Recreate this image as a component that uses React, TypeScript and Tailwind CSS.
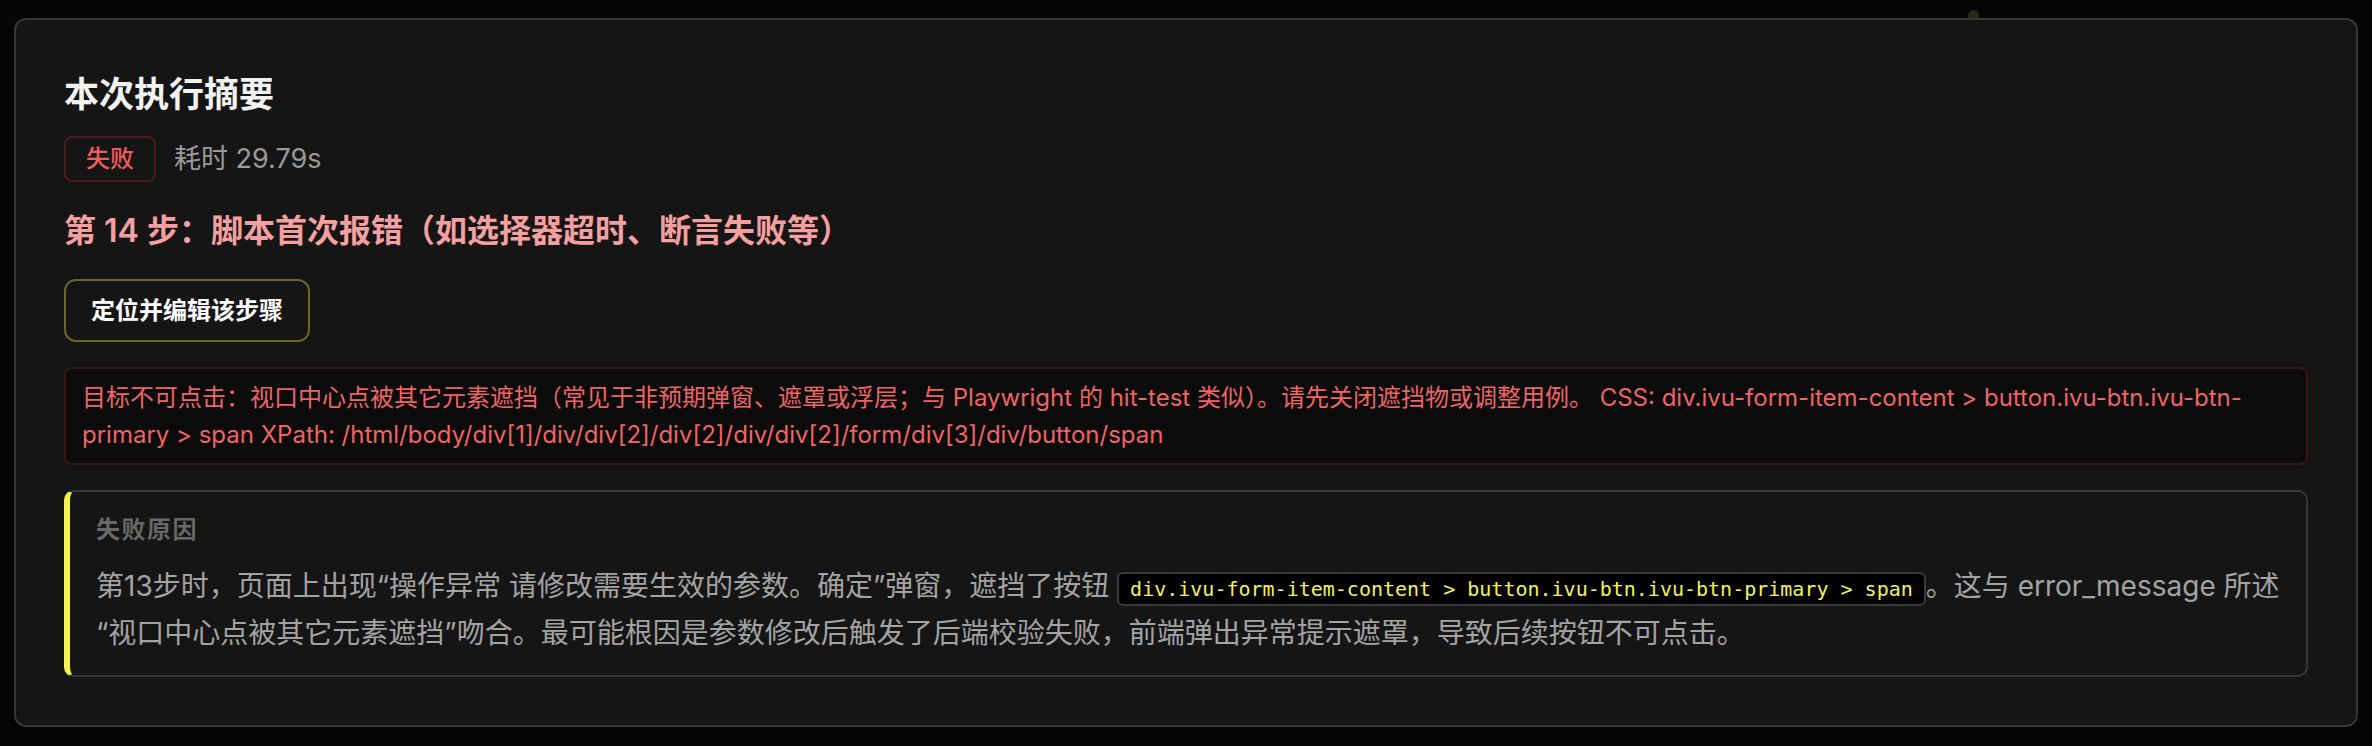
import React from "react";

const sans = "font-['Inter','Noto_Sans_CJK_SC',sans-serif]";

export default function App() {
  const cssPath = "div.ivu-form-item-content > button.ivu-btn.ivu-btn-primary > span";

  return (
    <div className={`relative min-h-screen bg-[#050505] px-[14px] pt-[18px] pb-[18px] ${sans}`}>
      {/* small dim dot peeking above the card */}
      <div className="absolute left-[1968px] top-[10px] h-[11px] w-[11px] rounded-full bg-[#29291a]" />

      <div className="relative rounded-[12px] border-2 border-[#363636] bg-[#151515] px-[48px] pt-[48px] pb-[48px]">
        <h2 className="text-[35px] leading-[52px] font-semibold text-[#f2f2f2]">本次执行摘要</h2>

        <div className="mt-[16px] flex items-center gap-[18px]">
          <span className="flex h-[46px] items-center rounded-[8px] border-2 border-[#4a1b1b] px-[20px] text-[24px] font-medium text-[#f25c5c]">
            失败
          </span>
          <span className="text-[27px] text-[#9a9a9a]">耗时 29.79s</span>
        </div>

        <div className="mt-[27px] text-[32px] leading-[44px] font-semibold text-[#f4a0a0]">
          第 14 步：脚本首次报错（如选择器超时、断言失败等）
        </div>

        <button className="mt-[26px] flex h-[63px] items-center rounded-[12px] border-2 border-[#67672b] px-[25px] text-[24px] font-semibold text-white">
          定位并编辑该步骤
        </button>

        <div className="mt-[25px] rounded-[8px] border-2 border-[#3d1517] bg-[#0b0b0b] px-[16px] py-[10px] text-[24px] leading-[37px] text-[#f06464]">
          目标不可点击：视口中心点被其它元素遮挡（常见于非预期弹窗、遮罩或浮层；与 Playwright 的 hit-test 类似）。请先关闭遮挡物或调整用例。 CSS: {cssPath} XPath: /html/body/div[1]/div/div[2]/div[2]/div/div[2]/form/div[3]/div/button/span
        </div>

        <div className="mt-[25px] rounded-[10px] border-2 border-l-[6px] border-[#383838] border-l-[#f5f552] pl-[26px] pr-[6px] pt-[20px] pb-[18px]">
          <div className="text-[24px] leading-[36px] font-semibold tracking-[1.5px] text-[#686868]">失败原因</div>
          <p className="mt-[15px] text-[28px] leading-[47px] text-[#a3a3a3]">
            第13步时，页面上出现“操作异常 请修改需要生效的参数。确定”弹窗，遮挡了按钮{" "}
            <code className="inline-block rounded-[6px] border-2 border-[#3a3a3a] bg-black px-[11px] py-[2px] font-['DejaVu_Sans_Mono',monospace] text-[20px] leading-[26px] text-[#f3f35c]">
              {cssPath}
            </code>
            。这与 error_message 所述<wbr />“视口中心点被其它元素遮挡”吻合。最可能根因是参数修改后触发了后端校验失败，前端弹出异常提示遮罩，导致后续按钮不可点击。
          </p>
        </div>
      </div>
    </div>
  );
}
